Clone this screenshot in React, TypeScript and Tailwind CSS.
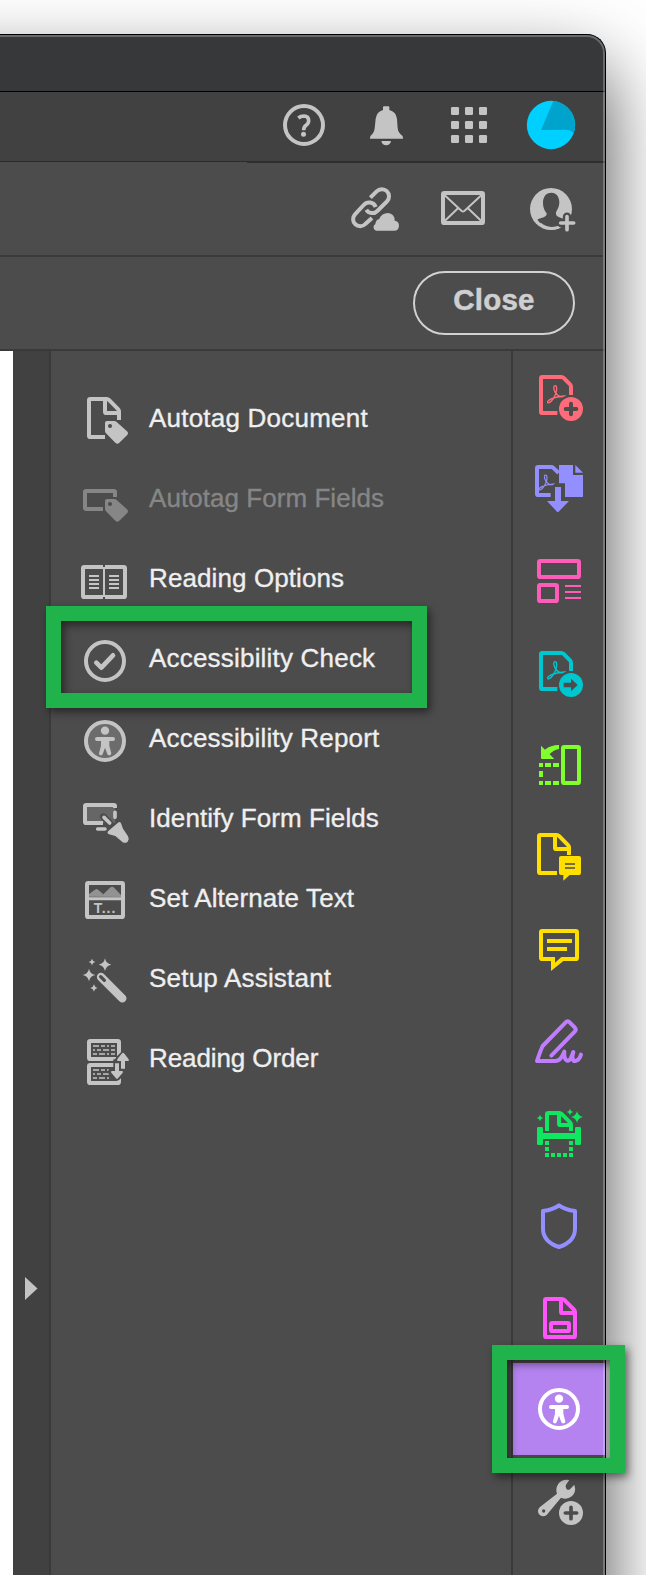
import type { ReactNode } from "react";

const PANEL = "#4c4c4c";
const LIGHT = "#c4c4c4";

function Star({ x, y, r }: { x: number; y: number; r: number }) {
  const k = r * 0.16;
  return (
    <path
      d={`M${x} ${y - r}Q${x + k} ${y - k} ${x + r} ${y}Q${x + k} ${y + k} ${x} ${y + r}Q${x - k} ${y + k} ${x - r} ${y}Q${x - k} ${y - k} ${x} ${y - r}Z`}
      fill="currentColor"
    />
  );
}

function Tag({ dy = 0 }: { dy?: number }) {
  return (
    <g transform={`translate(0 ${dy})`}>
      <path
        d="M135 159Q135 153 141 153H163Q167 153 170 156L201 184Q207 190 201 196L178 218Q172 224 166 218L138 190Q135 187 135 183Z"
        fill="currentColor"
      />
      <circle cx="150" cy="168" r="6" fill={PANEL} />
    </g>
  );
}

function Person() {
  return (
    <>
      <circle cx="195" cy="407" r="12.500" fill="currentColor" />
      <path
        d="M171 426H219Q225 426 225 432Q225 438 219 438H208V452L214 475Q214 481 209 481Q204 482 202 478L195 458L188 478Q186 482 181 481Q176 480 177 475L183 452V438H171Q165 438 165 432Q165 426 171 426Z"
        fill="currentColor"
      />
    </>
  );
}

function PdfSwirl() {
  return (
    <path
      d="M165 122C173 122 170 139 166 149C160 163 150 176 143 173C140 166 162 155 192 153C183 159 172 151 165 141C160 131 160 122 165 122Z"
      fill="none"
      stroke="currentColor"
      strokeWidth="4"
    />
  );
}

type Pt = [number, number];

/** Joins the points with straight lines whose corners are eased by r. */
function eased(points: Pt[], closed: boolean, r: number) {
  const n = points.length;
  const toward = (a: Pt, b: Pt): Pt => {
    const len = Math.hypot(b[0] - a[0], b[1] - a[1]);
    const t = Math.min(r, len / 2) / len;
    return [a[0] + (b[0] - a[0]) * t, a[1] + (b[1] - a[1]) * t];
  };
  let d = "";
  points.forEach((p, i) => {
    if (!closed && (i === 0 || i === n - 1)) {
      d += `${i === 0 ? "M" : "L"}${p[0]} ${p[1]}`;
      return;
    }
    const a = toward(p, points[(i - 1 + n) % n]);
    const b = toward(p, points[(i + 1) % n]);
    d += `${d ? "L" : "M"}${a[0]} ${a[1]}Q${p[0]} ${p[1]} ${b[0]} ${b[1]}`;
  });
  return closed ? d + "Z" : d;
}

function Line({ pts, closed = false, r = 4 }: { pts: Pt[]; closed?: boolean; r?: number }) {
  return (
    <path
      d={eased(pts, closed, r)}
      fill="none"
      stroke="currentColor"
      strokeWidth="12"
      strokeLinejoin="round"
    />
  );
}

function Box({ x, y, w, h, r = 4 }: { x: number; y: number; w: number; h: number; r?: number }) {
  return (
    <rect
      x={x}
      y={y}
      width={w}
      height={h}
      rx={r}
      fill="none"
      stroke="currentColor"
      strokeWidth="12"
    />
  );
}

const ROW = "h-20 w-[54px] shrink-0";

type Tool = { label: string; track: string; box: string; art: ReactNode; disabled?: boolean };

const tools: Tool[] = [
  {
    label: "Autotag Document",
    track: "tracking-[0.22px]",
    box: "54 24 162 240",
    art: (
      <>
        <Line pts={[[135, 201], [87, 201], [87, 87], [144, 87], [177, 120], [177, 150]]} />
        <Line pts={[[135, 87], [135, 129], [177, 129]]} />
        <Tag />
      </>
    ),
  },
  {
    label: "Autotag Form Fields",
    track: "tracking-[0.05px]",
    box: "54 264 162 240",
    disabled: true,
    art: (
      <>
        <Line pts={[[129, 417], [75, 417], [75, 363], [165, 363], [165, 381]]} />
        <Tag dy={234} />
      </>
    ),
  },
  {
    label: "Reading Options",
    track: "tracking-[0.1px]",
    box: "54 504 162 240",
    art: (
      <>
        <Line pts={[[129, 591], [69, 591], [69, 681], [129, 681]]} />
        <Line pts={[[135, 591], [195, 591], [195, 681], [135, 681]]} />
        <path d="M132 591V681" stroke="currentColor" strokeWidth="6" />
        <path d="M132 584V591M132 681V688" stroke={PANEL} strokeWidth="5" />
        <path
          d="M87 618H117M87 630H117M87 642H117M87 654H117M147 618H177M147 630H177M147 642H177M147 654H177"
          stroke="currentColor"
          strokeWidth="6"
        />
      </>
    ),
  },
  {
    label: "Accessibility Check",
    track: "tracking-[0.2px]",
    box: "114 69 162 240",
    art: (
      <>
        <circle cx="195" cy="198" r="57" fill="none" stroke="currentColor" strokeWidth="12" />
        <path
          d="M169 203L184 218L219 181"
          fill="none"
          stroke="currentColor"
          strokeWidth="14"
          strokeLinejoin="round"
          strokeLinecap="round"
        />
      </>
    ),
  },
  {
    label: "Accessibility Report",
    track: "tracking-[0.18px]",
    box: "114 309 162 240",
    art: (
      <>
        <circle cx="195" cy="438" r="57" fill="#6c6c6c" stroke="currentColor" strokeWidth="12" />
        <Person />
      </>
    ),
  },
  {
    label: "Identify Form Fields",
    track: "tracking-[0.08px]",
    box: "54 -6 162 240",
    art: (
      <>
        <rect x="75" y="75" width="90" height="54" fill="#666" />
        <Line pts={[[129, 129], [75, 129], [75, 75], [165, 75], [165, 84]]} />
        <path d="M130 110L150 130" stroke={PANEL} strokeWidth="20" strokeLinecap="round" />
        <path
          d="M132 112L149 129M165 97V112M113 147H135"
          stroke="currentColor"
          strokeWidth="11"
          strokeLinecap="round"
        />
        <path
          d="M174 128Q180 123 183 130L189 146L204 169Q209 177 203 185Q196 191 188 187L166 168L147 163Q140 160 144 154Z"
          fill="currentColor"
        />
      </>
    ),
  },
  {
    label: "Set Alternate Text",
    track: "tracking-[0.1px]",
    box: "54 234 162 240",
    art: (
      <>
        <path
          d="M87 350V342L105 329Q110 325 115 330L130 343L150 323Q157 317 163 324L183 345V351Z"
          fill="#929292"
        />
        <Box x={81} y={309} w={108} h={102} />
        <path d="M81 356H189" stroke="currentColor" strokeWidth="9" />
        <text
          x="101"
          y="398"
          fill="currentColor"
          fontSize="42"
          fontWeight="bold"
          fontFamily="Liberation Sans, sans-serif"
          textLength="65"
        >
          T...
        </text>
      </>
    ),
  },
  {
    label: "Setup Assistant",
    track: "tracking-[0.2px]",
    box: "54 474 162 240",
    art: (
      <>
        <path d="M123 591L187 655" stroke="currentColor" strokeWidth="25" strokeLinecap="round" />
        <path d="M122 590L133 601" stroke={PANEL} strokeWidth="10" strokeLinecap="round" />
        <Star x={135} y={554} r={19} />
        <Star x={87} y={585} r={19} />
        <Star x={96} y={546} r={10} />
        <Star x={102} y={624} r={11} />
      </>
    ),
  },
  {
    label: "Reading Order",
    track: "tracking-[-0.1px]",
    box: "54 714 162 240",
    art: (
      <>
        <Box x={87} y={783} w={90} h={54} />
        <Box x={87} y={855} w={90} h={54} />
        <path
          d="M99 798H117M123 798H135M141 798H147M153 798H165M99 810H105M111 810H123M129 810H147M153 810H165M99 822H111M117 822H135M141 822H147M153 822H165M99 870H117M123 870H135M141 870H147M99 882H105M111 882H123M129 882H147M99 894H111M117 894H135M141 894H147"
          stroke="currentColor"
          strokeWidth="5"
        />
        <path
          d="M195 872V843H207Q210 840 205 834L189 818L173 834Q168 840 171 843H165V873H150Q147 876 152 881L168 896Q171 898 174 896L188 883V872Z"
          fill={PANEL}
          stroke={PANEL}
          strokeWidth="10"
        />
        <path
          d="M183 866V843H173Q169 841 173 836L186 820Q189 817 192 820L205 836Q209 841 205 843H195V866ZM165 850H177V873H187Q191 875 187 880L174 895Q171 898 168 895L155 880Q151 875 155 873H165Z"
          fill="currentColor"
        />
      </>
    ),
  },
];

type RailItem = { name: string; tint: string; box: string; art: ReactNode; active?: boolean };

const rail: RailItem[] = [
  {
    name: "create",
    tint: "text-[#ff6b78]",
    box: "39 18 270 276",
    art: (
      <>
        <Line pts={[[172, 204], [123, 204], [123, 96], [188, 96], [213, 121], [213, 150]]} />
        <PdfSwirl />
        <circle cx="213" cy="192" r="36" fill="currentColor" />
        <path
          d="M197 192H229M213 176V208"
          stroke={PANEL}
          strokeWidth="12"
          strokeLinecap="round"
        />
      </>
    ),
  },
  {
    name: "combine",
    tint: "text-[#938fff]",
    box: "39 294 270 276",
    art: (
      <>
        <Line pts={[[152, 450], [111, 450], [111, 366], [157, 366], [176, 384]]} />
        <g transform="translate(-7 284) scale(.87)">
          <PdfSwirl />
        </g>
        <path d="M177 360H219V390H249V454Q249 456 247 456H195V415H177Z" fill="currentColor" />
        <path d="M226 360L249 383H226Z" fill="currentColor" />
        <path
          d="M165 426H183V468H207L176 500Q174 502 171 500L141 468H165Z"
          fill="currentColor"
        />
      </>
    ),
  },
  {
    name: "organize",
    tint: "text-[#ff5cb9]",
    box: "39 570 270 276",
    art: (
      <>
        <Box x={117} y={648} w={120} h={48} />
        <Box x={117} y={720} w={54} h={48} />
        <path d="M195 723H243M195 741H243M195 759H243" stroke="currentColor" strokeWidth="6" />
      </>
    ),
  },
  {
    name: "export",
    tint: "text-[#00c6d0]",
    box: "39 51 270 276",
    art: (
      <>
        <Line pts={[[172, 237], [123, 237], [123, 129], [188, 129], [213, 154], [213, 183]]} />
        <g transform="translate(0 33)">
          <PdfSwirl />
        </g>
        <circle cx="213" cy="225" r="36" fill="currentColor" />
        <path d="M191 218H213V206L233 225L213 244V232H191Z" fill={PANEL} />
      </>
    ),
  },
  {
    name: "pages",
    tint: "text-[#80ff2c]",
    box: "39 327 270 276",
    art: (
      <>
        <Box x={189} y={411} w={48} h={108} />
        <path
          d="M123 407L135 419Q152 405 177 405V417Q158 421 149 433L163 447H126Q123 447 123 444Z"
          fill="currentColor"
        />
        <path
          d="M117 459H129V471H117ZM135 459H153V471H135ZM159 459H177V471H159ZM117 483H129V501H117ZM117 513H129V525H117ZM135 513H153V525H135ZM159 513H177V525H159Z"
          fill="currentColor"
        />
      </>
    ),
  },
  {
    name: "send",
    tint: "text-[#ffdf00]",
    box: "39 603 270 276",
    art: (
      <>
        <Line pts={[[171, 789], [117, 789], [117, 675], [174, 675], [207, 708], [207, 735]]} />
        <Line pts={[[165, 675], [165, 717], [207, 717]]} />
        <path
          d="M183 738H237Q243 738 243 744V789Q243 795 237 795H209L190 812V795H183Q177 795 177 789V744Q177 738 183 738Z"
          fill="currentColor"
        />
        <path d="M195 762H225M195 774H225" stroke={PANEL} strokeWidth="5" />
      </>
    ),
  },
  {
    name: "comment",
    tint: "text-[#ffdf00]",
    box: "39 69 270 276",
    art: (
      <>
        <Line pts={[[165, 237], [123, 237], [123, 153], [231, 153], [231, 237], [186, 237]]} />
        <path d="M153 234V273L190 243V231H184L165 248V234Z" fill="currentColor" />
        <path d="M141 183H216M141 207H201" stroke="currentColor" strokeWidth="12" />
      </>
    ),
  },
  {
    name: "sign",
    tint: "text-[#c17dff]",
    box: "39 345 270 276",
    art: (
      <path
        d="M154 527L224 455Q230 448 224 442L209 427Q203 420 197 427L128 498Q124 505 111 543H165C181 543 186 530 193 515C191 531 196 543 205 542C214 539 215 525 220 516C215 531 217 544 226 543C236 541 240 534 243 524"
        fill="none"
        stroke="currentColor"
        strokeWidth="12"
        strokeLinecap="round"
        strokeLinejoin="round"
      />
    ),
  },
  {
    name: "scan",
    tint: "text-[#0ee75f]",
    box: "39 621 270 276",
    art: (
      <>
        <Line pts={[[141, 753], [141, 699], [182, 699], [213, 730], [213, 753]]} />
        <Line pts={[[177, 699], [177, 735], [213, 735]]} />
        <path
          d="M115 741H125Q129 741 129 745V759H225V745Q225 741 229 741H239Q243 741 243 745V791Q243 795 239 795H229Q225 795 225 791V777H129V791Q129 795 125 795H115Q111 795 111 791V745Q111 741 115 741Z"
          fill="currentColor"
        />
        <path
          d="M135 783H147V795H135ZM207 783H219V795H207ZM135 801H147V813H135ZM207 801H219V813H207ZM135 819H147V831H135ZM153 819H165V831H153ZM171 819H183V831H171ZM189 819H201V831H189ZM207 819H219V831H207Z"
          fill="currentColor"
        />
        <Star x={120} y={714} r={10} />
        <Star x={210} y={696} r={10} />
        <Star x={231} y={711} r={18} />
      </>
    ),
  },
  {
    name: "protect",
    tint: "text-[#938fff]",
    box: "99 -3 270 276",
    art: (
      <path
        d="M237 76Q220 89 189 93V146Q189 185 237 201Q285 185 285 146V93Q254 89 237 76Z"
        fill="none"
        stroke="currentColor"
        strokeWidth="12"
        strokeLinejoin="round"
      />
    ),
  },
  {
    name: "form",
    tint: "text-[#ff55fa]",
    box: "99 273 270 276",
    art: (
      <>
        <Line closed pts={[[195, 357], [250, 357], [285, 392], [285, 471], [195, 471]]} />
        <Line pts={[[243, 357], [243, 399], [285, 399]]} />
        <Box x={213} y={429} w={54} h={24} />
      </>
    ),
  },
  {
    name: "accessibility",
    tint: "text-white",
    box: "99 549 270 276",
    active: true,
    art: (
      <g transform="translate(42 249)">
        <circle cx="195" cy="438" r="57" fill="none" stroke="currentColor" strokeWidth="12" />
        <Person />
      </g>
    ),
  },
  {
    name: "more",
    tint: "text-[#c4c4c4]",
    box: "99 825 270 276",
    art: (
      <>
        <path
          d="M268 900Q256 897 246 902Q230 910 229 929Q229 936 231 941L179 982Q170 992 177 1003Q187 1013 200 1005L243 953Q249 956 257 956Q276 955 284 937Q287 925 283 914L270 928Q264 932 259 926Q255 919 258 914Z"
          fill="currentColor"
        />
        <circle cx="191" cy="993" r="5" fill={PANEL} />
        <circle cx="273" cy="999" r="42" fill={PANEL} />
        <circle cx="273" cy="999" r="36" fill="currentColor" />
        <path
          d="M256 999H290M273 982V1016"
          stroke={PANEL}
          strokeWidth="11"
          strokeLinecap="round"
        />
      </>
    ),
  },
];

function TopBar() {
  const s = "h-[69px] w-[82px]";
  return (
    <div className="flex h-[69px] justify-end bg-[#414141] pr-3 text-[#c4c4c4]">
      <svg className={s} viewBox="69 216 246 207">
        <circle cx="192" cy="315" r="57" fill="none" stroke="currentColor" strokeWidth="12" />
        <path
          d="M175 294Q182 288 192 288Q206 289 206 302Q206 310 198 316Q191 321 191 331"
          fill="none"
          stroke="currentColor"
          strokeWidth="11"
        />
        <circle cx="190.500" cy="343" r="7.500" fill="currentColor" />
      </svg>
      <svg className={s} viewBox="315 216 246 207" fill="currentColor">
        <path d="M429 270V262Q429 259 432 259H445Q448 259 448 262V270Q468 275 471 296L473 325Q475 340 487 347Q489 349 489 356H390Q390 349 392 347Q402 340 404 325L407 296Q410 275 429 270Z" />
        <path d="M424 363H453Q450 376 438.500 376Q427 376 424 363Z" />
      </svg>
      <svg className={s} viewBox="561 216 246 207" fill="currentColor">
        {[261, 303, 345].map((y) =>
          [633, 675, 717].map((x) => (
            <rect key={`${x}-${y}`} x={x} y={y} width="24" height="24" rx="4" />
          )),
        )}
      </svg>
      <svg className={s} viewBox="807 216 246 207">
        <circle cx="933" cy="315" r="72.500" fill="#00d0ff" />
        <path d="M940 243A72 72 0 0 1 1001 339Q991 329 975 329L903 330Z" fill="#00a3cb" />
      </svg>
    </div>
  );
}

function ShareBar() {
  const s = "h-[92px] w-[89px]";
  return (
    <div className="flex h-[94px] justify-end border-b-2 border-[#3a3a3a] bg-[#4c4c4c] pr-1.5 text-[#c4c4c4]">
      <svg className={s} viewBox="270 429 267 276">
        <g fill="none" stroke="currentColor" strokeWidth="12">
          <path d="M391 533L410 514A21 21 0 0 1 441 544L412 573A21 21 0 0 1 379 569" />
          <path d="M396 594L376 612A21 21 0 0 1 345 583L371 555A21 21 0 0 1 407 561" />
        </g>
        <path
          d="M408 632A11 11 0 0 1 406 612Q408 598 425 598Q428 579 444 579Q464 581 464 602Q477 604 477 617Q476 632 463 632Z"
          fill="none"
          stroke={PANEL}
          strokeWidth="10"
        />
        <path
          d="M408 632A11 11 0 0 1 406 612Q408 598 417 598Q425 579 444 579Q464 581 464 602Q477 604 477 617Q476 632 463 632Z"
          fill="currentColor"
        />
      </svg>
      <svg className={s} viewBox="537 429 267 276" fill="none" stroke="currentColor">
        <rect x="609" y="519" width="120" height="90" rx="4" strokeWidth="12" />
        <path
          d="M614 526L665 573Q669 576 673 573L724 526M614 603L654 565M724 603L684 565"
          strokeWidth="6"
        />
      </svg>
      <svg className={s} viewBox="804 429 267 276">
        <circle cx="933" cy="567" r="63" fill="currentColor" />
        <path
          d="M934 518C950 518 959 532 958 550C957 563 951 571 948 577C946 592 957 590 972 598L960 616Q934 626 909 615Q898 608 892 599C905 591 921 594 920 580C912 570 909 560 909 548C909 530 918 518 934 518Z"
          fill={PANEL}
        />
        <path d="M900 611Q928 632 956 622" fill="none" stroke="currentColor" strokeWidth="7" />
        <path
          d="M963 609H1000M981 590V628"
          stroke={PANEL}
          strokeWidth="25"
          strokeLinecap="round"
        />
        <path
          d="M962 609H1001M981 590V629"
          stroke="currentColor"
          strokeWidth="11"
          strokeLinecap="round"
        />
      </svg>
    </div>
  );
}

function Highlight({ className }: { className: string }) {
  return (
    <div
      className={`pointer-events-none absolute border-[15px] border-[#20b24b] drop-shadow-[3px_4px_4px_rgba(0,0,0,0.5)] ${className}`}
    />
  );
}

export default function App() {
  return (
    <div
      className="relative h-[1575px] w-[646px] overflow-hidden bg-white pt-[34px]"
      style={{ fontFamily: '"Liberation Sans", Arial, sans-serif' }}
    >
      <div className="-ml-[100px] h-[1700px] w-[706px] overflow-hidden rounded-tr-[19px] border-t border-r border-black bg-[#4c4c4c] pl-[100px] shadow-[0_34px_74px_rgba(0,0,0,0.7)]">
        <div className="relative h-full overflow-hidden rounded-tr-[18px]">
          <div className="h-[57px] border-b border-black bg-[#37383a]" />
          <div className="pr-0.5">
            <TopBar />
          </div>
          <div className="flex h-0.5 bg-[#4c4c4c]">
            <div className="h-px w-[247px] bg-[#2b2b2b]" />
            <div className="h-0.5 flex-1 bg-[#2e2e2e]" />
          </div>
          <div className="pr-0.5">
            <ShareBar />
          </div>
          <div className="flex h-[94px] items-start justify-end border-b-2 border-[#3a3a3a] bg-[#4c4c4c] pt-3.5 pr-[30px]">
            <button className="flex h-16 w-[162px] items-center justify-center rounded-full border-2 border-[#d2d2d2] pb-1.5 text-[29.5px] leading-none font-bold tracking-[0.2px] text-[#cfcfcf] [-webkit-text-stroke:0.5px_#cfcfcf]">
              Close
            </button>
          </div>
          <div className="flex h-[1300px]">
            <div className="w-[13px] bg-white" />
            <div className="w-[38px] border-r-2 border-[#3a3a3a] bg-[#414141] pt-[926px] pl-3">
              <svg className="h-[23px] w-[13px]" viewBox="0 0 13 23">
                <path d="M0 0L12.500 11.500L0 23Z" fill={LIGHT} />
              </svg>
            </div>
            <div className="w-[462px] border-r-2 border-[#3a3a3a] pt-[27px] pl-[27px]">
              {tools.map((t) => (
                <div
                  key={t.label}
                  className={`flex h-20 items-center ${t.disabled ? "text-[#868686]" : "text-[#c4c4c4]"}`}
                >
                  <svg className={ROW} viewBox={t.box}>
                    {t.art}
                  </svg>
                  <span
                    className={`ml-[17px] text-[26px] leading-none whitespace-nowrap [-webkit-text-stroke:0.35px_currentColor] ${t.track} ${t.disabled ? "text-[#868686]" : "text-[#efefef]"}`}
                  >
                    {t.label}
                  </span>
                </div>
              ))}
            </div>
            <div className="w-[92px]">
              {rail.map((r) => (
                <div key={r.name} className={`${r.tint} ${r.active ? "bg-[#b583f0]" : ""}`}>
                  <svg className="block h-[92px] w-[90px]" viewBox={r.box}>
                    {r.art}
                  </svg>
                </div>
              ))}
            </div>
          </div>
          <div className="pointer-events-none absolute inset-0 rounded-tr-[18px] border-t-2 border-r-2 border-white/25" />
        </div>
      </div>
      <Highlight className="top-[606px] left-[46px] h-[102px] w-[381px]" />
      <Highlight className="top-[1345px] left-[492px] h-[128px] w-[133px]" />
    </div>
  );
}
